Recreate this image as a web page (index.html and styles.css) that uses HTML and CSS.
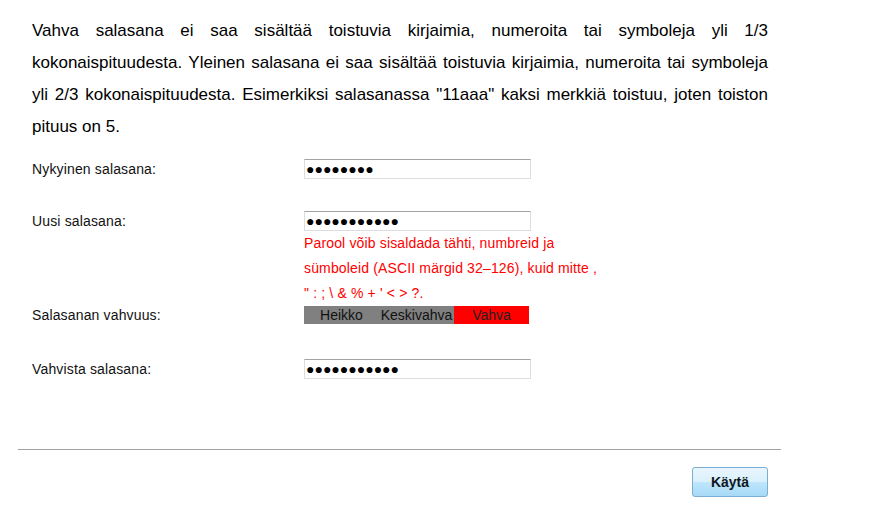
FILE: index.html
```html
<!DOCTYPE html>
<html lang="fi">
<head>
    <meta charset="UTF-8">
    <title>Salasanan vaihto</title>
    <link rel="stylesheet" href="styles.css">
</head>
<body>
    <div class="page">
        <p class="intro">Vahva salasana ei saa sisältää toistuvia kirjaimia, numeroita tai symboleja yli 1/3 kokonaispituudesta. Yleinen salasana ei saa sisältää toistuvia kirjaimia, numeroita tai symboleja yli 2/3 kokonaispituudesta. Esimerkiksi salasanassa "11aaa" kaksi merkkiä toistuu, joten toiston pituus on 5.</p>

        <form class="pw-form">
            <div class="row">
                <label for="pw-current">Nykyinen salasana:</label>
                <div class="field">
                    <input id="pw-current" class="pw" value="●●●●●●●●" readonly>
                </div>
            </div>

            <div class="row row-new">
                <label for="pw-new">Uusi salasana:</label>
                <div class="field">
                    <input id="pw-new" class="pw" value="●●●●●●●●●●●" readonly>
                    <p class="hint">Parool võib sisaldada tähti, numbreid ja sümboleid (ASCII märgid 32–126), kuid mitte , " : ; \ &amp; % + ' &lt; &gt; ?.</p>
                </div>
            </div>

            <div class="row row-strength">
                <label>Salasanan vahvuus:</label>
                <div class="strength">
                    <span>Heikko</span>
                    <span>Keskivahva</span>
                    <span class="on">Vahva</span>
                </div>
            </div>

            <div class="row row-last">
                <label for="pw-confirm">Vahvista salasana:</label>
                <div class="field">
                    <input id="pw-confirm" class="pw" value="●●●●●●●●●●●" readonly>
                </div>
            </div>
        </form>

        <div class="actions">
            <button type="button">Käytä</button>
        </div>
    </div>
</body>
</html>
```

FILE: styles.css
```css
body {
    margin: 0;
    background: #fff;
    color: #000;
    font-family: 'Liberation Sans', Arial, sans-serif;
}

.page {
    width: 763px;
    margin-left: 18px;
    padding-top: 15px;
}

.intro {
    width: 736px;
    margin: 0;
    padding: 0 0 0 14px;
    font-size: 17px;
    line-height: 32px;
    text-align: justify;
}

.pw-form {
    margin-top: 16px;
    padding-left: 14px;
}

.row {
    display: flex;
    align-items: flex-start;
    margin-bottom: 32px;

    label {
        width: 272px;
        flex-shrink: 0;
        font-size: 14px;
        letter-spacing: 0.15px;
        line-height: 20px;
        color: #111;
    }

    &.row-new {
        margin-bottom: 0;
    }

    &.row-strength {
        margin-bottom: 35px;

        label {
            line-height: 18px;
        }
    }

    &.row-last {
        margin-bottom: 70px;
    }
}

.pw {
    box-sizing: border-box;
    width: 227px;
    height: 20px;
    margin: 0;
    padding: 0 1px;
    border: 1px solid #dcdde2;
    border-top-color: #a3a3a3;
    font-family: 'Liberation Sans', Arial, sans-serif;
    font-size: 14px;
    color: #000;
    outline: none;
}

.hint {
    width: 296px;
    margin: 0;
    color: #f00;
    font-size: 14px;
    letter-spacing: 0.15px;
    line-height: 25px;
}

.strength {
    display: flex;
    width: 225px;
    height: 18px;
    background: #808080;

    span {
        width: 75px;
        display: flex;
        justify-content: center;
        font-size: 14px;
        line-height: 18px;
        color: #111;
        white-space: nowrap;
    }

    .on {
        background: #f00;
        color: #222;
    }
}

.actions {
    border-top: 1px solid #a0a0a0;
    display: flex;
    justify-content: flex-end;
    padding: 17px 13px 0 0;

    button {
        width: 76px;
        height: 30px;
        border: 1px solid #7aaed4;
        border-radius: 3px;
        background: linear-gradient(#eaf6fd 0%, #d9f0fc 48%, #bee6fd 52%, #a7d9f5 100%);
        font-family: 'Liberation Sans', Arial, sans-serif;
        font-size: 14px;
        font-weight: bold;
        color: #101820;
        cursor: pointer;
    }
}
```
